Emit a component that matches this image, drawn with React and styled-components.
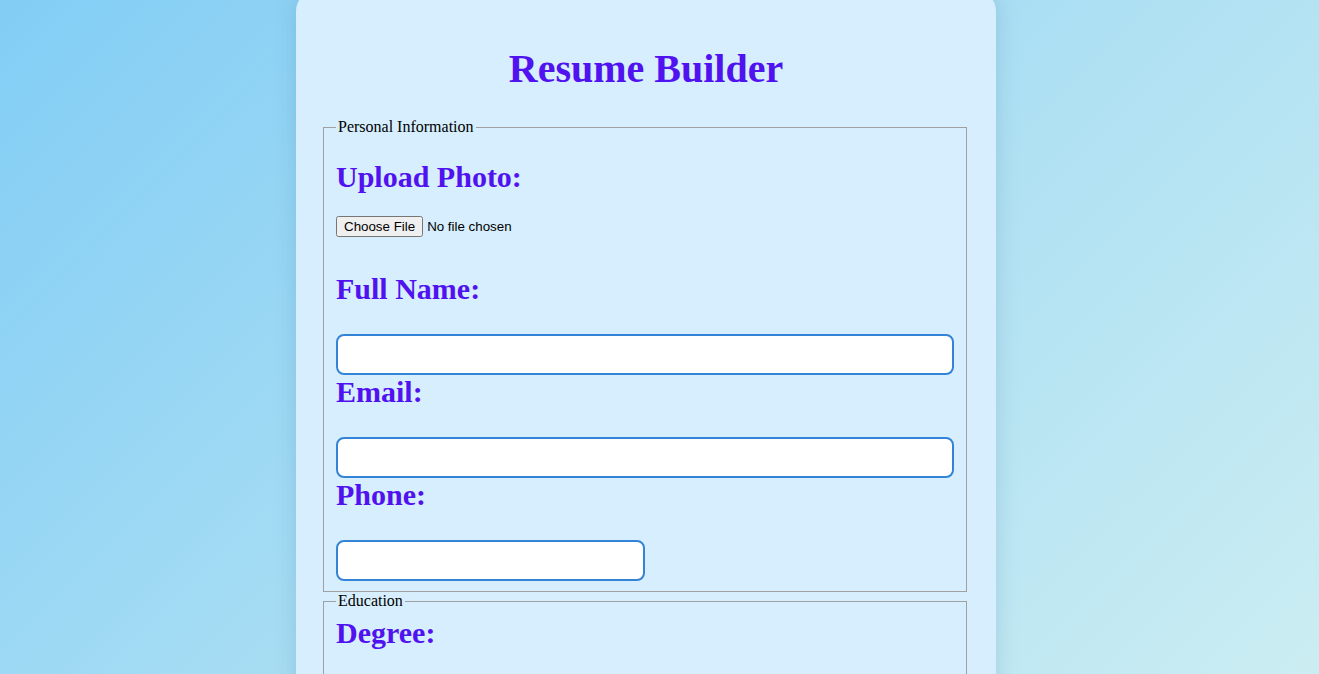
import styled, { createGlobalStyle } from 'styled-components';

const GlobalStyle = createGlobalStyle`
    html, body {
        margin: 0;
        padding: 0;
    }

    body {
        min-height: 100vh;
        background: linear-gradient(135deg, #82cdf5 0%, #a9def3 50%, #cbedf2 100%);
        background-attachment: fixed;
        font-family: "Liberation Serif", "Times New Roman", serif;
    }
`;

const Page = styled.div`
    padding-right: 27px;
`;

const Card = styled.div`
    box-sizing: border-box;
    width: 700px;
    margin: -9px auto 0;
    padding: 55px 27px 30px 25px;
    background: #d6eefd;
    border-radius: 20px;
    box-shadow: 0 0 22px rgba(40, 90, 140, 0.18);
`;

const Title = styled.h1`
    margin: 0 0 26px;
    padding-left: 2px;
    font-size: 40px;
    line-height: 46px;
    font-weight: 700;
    text-align: center;
    color: #5012ef;
`;

const Section = styled.fieldset`
    margin: 0 2px;
    padding: 6px 12px 10px;
    border: 1px solid #a0a0a0;
`;

const Legend = styled.legend`
    padding: 0 2px;
    font-size: 16px;
    color: #000;
`;

const Label = styled.label`
    display: block;
    margin-top: ${p => p.$gap || 0}px;
    font-size: 30px;
    line-height: 34px;
    font-weight: 700;
    color: #5012ef;
`;

const FileInput = styled.input`
    display: block;
    margin-top: 22px;
    font-family: "Liberation Sans", Arial, sans-serif;
    font-size: 13.33px;
    color: #000;
`;

const TextInput = styled.input`
    display: block;
    box-sizing: border-box;
    width: ${p => p.$half ? '50%' : '100%'};
    height: 41px;
    margin-top: 28px;
    padding: 0 10px;
    background: #fff;
    border: 2px solid #3384d6;
    border-radius: 8px;
    font-size: 16px;
    outline: none;
`;

const App = () => {
  return (
    <Page>
      <GlobalStyle />
      <Card>
        <Title>Resume Builder</Title>
        <Section>
          <Legend>Personal Information</Legend>
          <Label $gap={18} htmlFor="photo">Upload Photo:</Label>
          <FileInput id="photo" type="file" accept="image/*" />
          <Label $gap={35} htmlFor="name">Full Name:</Label>
          <TextInput id="name" type="text" />
          <Label htmlFor="email">Email:</Label>
          <TextInput id="email" type="email" />
          <Label htmlFor="phone">Phone:</Label>
          <TextInput id="phone" type="tel" $half />
        </Section>
        <Section>
          <Legend>Education</Legend>
          <Label htmlFor="degree">Degree:</Label>
          <TextInput id="degree" type="text" />
          <Label htmlFor="school">Institution:</Label>
          <TextInput id="school" type="text" />
          <Label htmlFor="year">Year of Graduation:</Label>
          <TextInput id="year" type="text" $half />
        </Section>
      </Card>
    </Page>
  )
}

export default App;
